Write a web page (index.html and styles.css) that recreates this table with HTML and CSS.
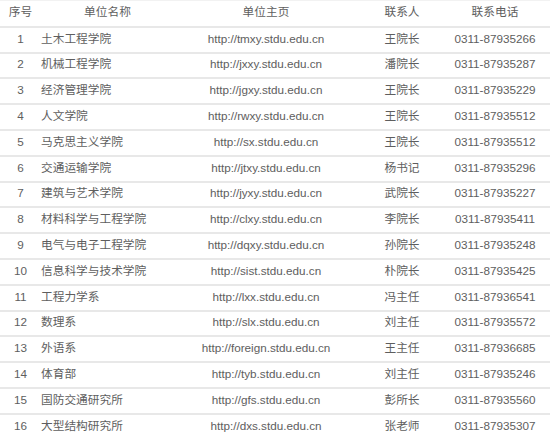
FILE: index.html
```html
<!DOCTYPE html>
<html lang="zh-CN">
<head>
<meta charset="utf-8">
<title>单位列表</title>
<link rel="stylesheet" href="styles.css">
</head>
<body>
<div class="table">
  <div class="row head">
    <div class="c1">序号</div><div class="c2 center">单位名称</div><div class="c3">单位主页</div><div class="c4">联系人</div><div class="c5">联系电话</div>
  </div>
  <div class="row"><div class="c1">1</div><div class="c2">土木工程学院</div><div class="c3">http://tmxy.stdu.edu.cn</div><div class="c4">王院长</div><div class="c5">0311-87935266</div></div>
  <div class="row"><div class="c1">2</div><div class="c2">机械工程学院</div><div class="c3">http://jxxy.stdu.edu.cn</div><div class="c4">潘院长</div><div class="c5">0311-87935287</div></div>
  <div class="row"><div class="c1">3</div><div class="c2">经济管理学院</div><div class="c3">http://jgxy.stdu.edu.cn</div><div class="c4">王院长</div><div class="c5">0311-87935229</div></div>
  <div class="row"><div class="c1">4</div><div class="c2">人文学院</div><div class="c3">http://rwxy.stdu.edu.cn</div><div class="c4">王院长</div><div class="c5">0311-87935512</div></div>
  <div class="row"><div class="c1">5</div><div class="c2">马克思主义学院</div><div class="c3">http://sx.stdu.edu.cn</div><div class="c4">王院长</div><div class="c5">0311-87935512</div></div>
  <div class="row"><div class="c1">6</div><div class="c2">交通运输学院</div><div class="c3">http://jtxy.stdu.edu.cn</div><div class="c4">杨书记</div><div class="c5">0311-87935296</div></div>
  <div class="row"><div class="c1">7</div><div class="c2">建筑与艺术学院</div><div class="c3">http://jyxy.stdu.edu.cn</div><div class="c4">武院长</div><div class="c5">0311-87935227</div></div>
  <div class="row"><div class="c1">8</div><div class="c2">材料科学与工程学院</div><div class="c3">http://clxy.stdu.edu.cn</div><div class="c4">李院长</div><div class="c5">0311-87935411</div></div>
  <div class="row"><div class="c1">9</div><div class="c2">电气与电子工程学院</div><div class="c3">http://dqxy.stdu.edu.cn</div><div class="c4">孙院长</div><div class="c5">0311-87935248</div></div>
  <div class="row"><div class="c1">10</div><div class="c2">信息科学与技术学院</div><div class="c3">http://sist.stdu.edu.cn</div><div class="c4">朴院长</div><div class="c5">0311-87935425</div></div>
  <div class="row"><div class="c1">11</div><div class="c2">工程力学系</div><div class="c3">http://lxx.stdu.edu.cn</div><div class="c4">冯主任</div><div class="c5">0311-87936541</div></div>
  <div class="row"><div class="c1">12</div><div class="c2">数理系</div><div class="c3">http://slx.stdu.edu.cn</div><div class="c4">刘主任</div><div class="c5">0311-87935572</div></div>
  <div class="row"><div class="c1">13</div><div class="c2">外语系</div><div class="c3">http://foreign.stdu.edu.cn</div><div class="c4">王主任</div><div class="c5">0311-87936685</div></div>
  <div class="row"><div class="c1">14</div><div class="c2">体育部</div><div class="c3">http://tyb.stdu.edu.cn</div><div class="c4">刘主任</div><div class="c5">0311-87935246</div></div>
  <div class="row"><div class="c1">15</div><div class="c2">国防交通研究所</div><div class="c3">http://gfs.stdu.edu.cn</div><div class="c4">彭所长</div><div class="c5">0311-87935560</div></div>
  <div class="row"><div class="c1">16</div><div class="c2">大型结构研究所</div><div class="c3">http://dxs.stdu.edu.cn</div><div class="c4">张老师</div><div class="c5">0311-87935307</div></div>
</div>
</body>
</html>
```
FILE: styles.css
```css
html, body {
  margin: 0;
  padding: 0;
  background: #ffffff;
}
body {
  font-family: "Liberation Sans", "Noto Sans CJK SC", sans-serif;
  font-size: 11.7px;
  color: #5e5e5e;
}
.table {
  width: 550px;
  display: flex;
  flex-direction: column;
}
.row {
  box-sizing: border-box;
  height: 25.8px;
  padding-bottom: 2px;
  border-top: 2px solid #e8e8e8;
  display: grid;
  grid-template-columns: 41px 133px 184px 88px 104px;
  align-items: center;
}
.row.head {
  border-top: 1px solid #f2f2f2;
}
.row > div {
  white-space: nowrap;
  text-align: center;
  line-height: 16px;
}
.row > .c2 {
  text-align: left;
}
.row > .c2.center {
  text-align: center;
}
.row > .c5 {
  padding-right: 6px;
}
```
